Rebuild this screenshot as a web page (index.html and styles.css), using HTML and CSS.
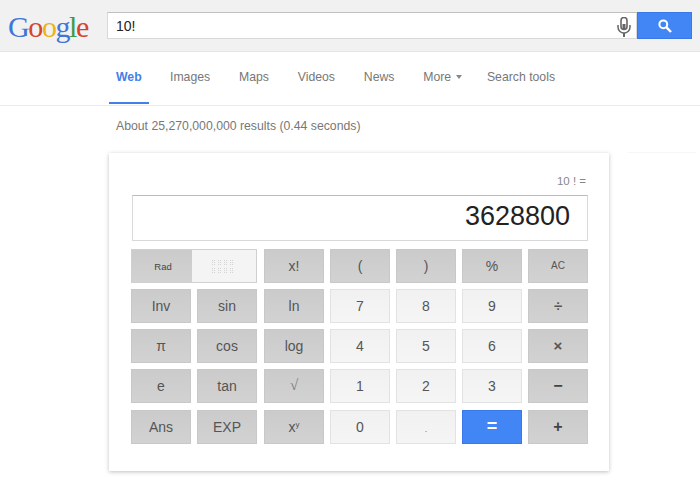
FILE: index.html
```html
<!DOCTYPE html>
<html lang="en">
<head>
    <meta charset="UTF-8">
    <meta name="viewport" content="width=device-width, initial-scale=1.0">
    <title>10! - Google Search</title>
    <link rel="stylesheet" href="styles.css">
</head>
<body>
    <div class="header">
        <div class="logo"><span class="c-blue">G</span><span class="c-red">o</span><span class="c-yellow">o</span><span class="c-blue">g</span><span class="c-green">l</span><span class="c-red">e</span></div>
        <div class="search-box">
            <div class="search-text">10!</div>
            <svg class="mic" width="14" height="20" viewBox="0 0 14 20">
                <rect x="4" y="0.5" width="6" height="12" rx="3" fill="none" stroke="#666" stroke-width="1.6"/>
                <rect x="5.5" y="7" width="3" height="5" fill="#666"/>
                <path d="M1 8v2a6 6 0 0 0 12 0V8" fill="none" stroke="#666" stroke-width="1.5"/>
                <path d="M7 16v4" stroke="#666" stroke-width="2"/>
            </svg>
        </div>
        <div class="search-button">
            <svg width="14" height="14" viewBox="0 0 14 14">
                <circle cx="5.3" cy="5.3" r="3.9" fill="none" stroke="#fff" stroke-width="2"/>
                <path d="M8.2 8.2L13 13" stroke="#fff" stroke-width="2.4"/>
            </svg>
        </div>
    </div>

    <div class="nav">
        <a class="nav-item active">Web</a>
        <a class="nav-item">Images</a>
        <a class="nav-item">Maps</a>
        <a class="nav-item">Videos</a>
        <a class="nav-item">News</a>
        <a class="nav-item">More<span class="caret"></span></a>
        <a class="nav-item">Search tools</a>
    </div>

    <div class="stats">About 25,270,000,000 results (0.44 seconds)</div>

    <div class="side-line"></div>

    <div class="calc">
        <div class="calc-expr">10 ! =</div>
        <div class="calc-display">3628800</div>
        <div class="keys">
            <div class="toggle">
                <div class="toggle-on">Rad</div>
                <div class="toggle-off">
                    <svg width="24" height="13" viewBox="0 0 24 13">
                        <pattern id="dots" width="6" height="8" patternUnits="userSpaceOnUse">
                            <path d="M0 0h1v1H0zM2 0h1v1H2zM0 2h1v1H0zM2 2h1v1H2zM0 4h1v1H0zM2 4h1v1H2z" fill="#d4d4d4"/>
                        </pattern>
                        <rect width="24" height="13" fill="url(#dots)"/>
                    </svg>
                </div>
            </div>
            <div class="key fn">x!</div>
            <div class="key fn">(</div>
            <div class="key fn">)</div>
            <div class="key fn">%</div>
            <div class="key fn small">AC</div>

            <div class="key fn">Inv</div>
            <div class="key fn">sin</div>
            <div class="key fn">ln</div>
            <div class="key num">7</div>
            <div class="key num">8</div>
            <div class="key num">9</div>
            <div class="key fn op">÷</div>

            <div class="key fn">π</div>
            <div class="key fn">cos</div>
            <div class="key fn">log</div>
            <div class="key num">4</div>
            <div class="key num">5</div>
            <div class="key num">6</div>
            <div class="key fn op">×</div>

            <div class="key fn">e</div>
            <div class="key fn">tan</div>
            <div class="key fn root">√</div>
            <div class="key num">1</div>
            <div class="key num">2</div>
            <div class="key num">3</div>
            <div class="key fn bold">−</div>

            <div class="key fn">Ans</div>
            <div class="key fn">EXP</div>
            <div class="key fn"><span>x<sup>y</sup></span></div>
            <div class="key num">0</div>
            <div class="key num point">.</div>
            <div class="key equals">=</div>
            <div class="key fn bold">+</div>
        </div>
    </div>
</body>
</html>
```

FILE: styles.css
```css
* {
    margin: 0;
    padding: 0;
    box-sizing: border-box;
}

body {
    min-height: 477px;
    font-family: "Liberation Sans", Arial, sans-serif;
    background: #fff;
}

.header {
    display: flex;
    align-items: flex-start;
    height: 52px;
    padding: 12px 8px 0 8px;
    background: #f1f1f1;
    border-bottom: 1px solid #e5e5e5;
}

.logo {
    width: 99px;
    margin-top: -3px;
    font-family: "Liberation Serif", serif;
    font-size: 30px;
    line-height: 36px;
    letter-spacing: -1.4px;
}

.c-blue { color: #3f76d8; }
.c-red { color: #d4452f; }
.c-yellow { color: #eeb313; }
.c-green { color: #3c9a4c; }

.search-box {
    display: flex;
    align-items: center;
    justify-content: space-between;
    width: 530px;
    height: 27px;
    padding: 0 5px 0 8px;
    background: #fff;
    border: 1px solid #d9d9d9;
    border-top-color: #c0c0c0;
}

.search-text {
    font-size: 14px;
    color: #222;
}

.mic {
    margin-top: 2px;
}

.search-button {
    display: flex;
    align-items: center;
    justify-content: center;
    width: 55px;
    height: 27px;
    background: #4285f4;
    border: 1px solid #3b78e7;
}

.nav {
    display: flex;
    height: 54px;
    padding-left: 109px;
    border-bottom: 1px solid #ebebeb;
}

.nav-item {
    height: 52px;
    margin-right: 28.8px;
    padding-top: 18px;
    font-size: 12.25px;
    color: #777;
}

.nav-item.active {
    width: 40px;
    padding-left: 7px;
    margin-right: 21px;
    color: #4580e8;
    font-weight: bold;
    border-bottom: 2px solid #4580e8;
}

.caret {
    display: inline-block;
    margin-left: 5px;
    margin-right: -4px;
    vertical-align: 2px;
    border-top: 4px solid #888;
    border-left: 3px solid transparent;
    border-right: 3px solid transparent;
}

.stats {
    height: 47px;
    padding: 13px 0 0 116px;
    font-size: 12.25px;
    color: #777;
}

.side-line {
    position: absolute;
    left: 628px;
    top: 152px;
    width: 68px;
    height: 1px;
    background: #f6f6f6;
}

.calc {
    width: 500px;
    height: 318px;
    margin-left: 109px;
    padding: 21px 21px 0 22px;
    background: #fff;
    box-shadow: 0 1px 4px rgba(0, 0, 0, 0.25);
}

.calc-expr {
    height: 21px;
    padding-right: 2px;
    text-align: right;
    font-size: 11.5px;
    line-height: 14px;
    color: #888;
}

.calc-display {
    height: 46px;
    margin-left: 1px;
    padding: 4px 17px 0 0;
    border: 1px solid #d9d9d9;
    border-top-color: #bbb;
    text-align: right;
    font-size: 27px;
    line-height: 32px;
    color: #222;
}

.keys {
    display: grid;
    grid-template-columns: 60px 61px 60px 60px 60px 60px 60px;
    grid-template-rows: 34px 34px 34px 35px 34px;
    column-gap: 6px;
    row-gap: 6px;
    margin-top: 8px;
}

.key {
    display: flex;
    align-items: center;
    justify-content: center;
    width: 60px;
    height: 34px;
    padding-bottom: 1px;
    font-size: 14px;
    color: #555;
}

.key.fn {
    background: linear-gradient(#cbcbcb, #d2d2d2);
    border: 1px solid #c8c8c8;
}

.key.num {
    background: linear-gradient(#f1f1f1, #f5f5f5);
    border: 1px solid #e2e2e2;
}

.key.small {
    font-size: 10px;
}

.key.op {
    font-size: 15px;
    font-weight: bold;
}

.key.bold {
    font-size: 16px;
    font-weight: bold;
    color: #444;
}

.key.root {
    color: #777;
    font-family: "Liberation Serif", serif;
    font-size: 15px;
}

.key.point {
    padding-top: 3px;
    padding-bottom: 0;
    font-size: 9px;
    color: #777;
}

.key.equals {
    background: #4285f4;
    border: 1px solid #3b78e7;
    color: #fff;
    font-size: 18px;
    font-weight: bold;
}

.key sup {
    font-size: 8px;
    line-height: 0;
    vertical-align: 5px;
}

.toggle {
    display: flex;
    grid-column: span 2;
    width: 126px;
    height: 34px;
    border: 1px solid #d0d0d0;
}

.toggle-on {
    display: flex;
    align-items: center;
    justify-content: center;
    width: 60px;
    padding-left: 2px;
    background: linear-gradient(#cbcbcb, #d2d2d2);
    font-size: 9.5px;
    color: #444;
}

.toggle-off {
    display: flex;
    flex: 1;
    align-items: center;
    justify-content: center;
    background: #f4f4f4;
}
```
